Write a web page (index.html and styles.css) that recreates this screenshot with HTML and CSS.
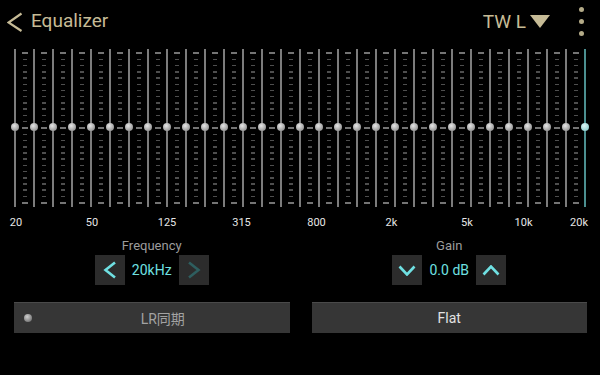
FILE: index.html
```html
<!DOCTYPE html>
<html lang="ja">
<head>
  <meta charset="UTF-8">
  <title>Equalizer</title>
  <link rel="stylesheet" href="styles.css">
</head>
<body>

  <!-- Barra superior -->
  <div class="topbar">
    <svg class="back" width="16" height="20" viewBox="0 0 16 20">
      <polyline points="14.5,1.5 1.5,10.5 14.5,19" fill="none" stroke="#c6bb96" stroke-width="2.2"/>
    </svg>
    <h1>Equalizer</h1>
    <div class="preset">
      <span>TW L</span>
      <svg width="20" height="13" viewBox="0 0 20 13"><polygon points="0,0 20,0 10,13" fill="#c6bb96"/></svg>
    </div>
    <div class="menu"><span></span><span></span><span></span></div>
  </div>

  <!-- Faixas do equalizador (geradas pelo script) -->
  <div class="eq" id="eq"></div>

  <!-- Rótulos de frequência -->
  <div class="freq-labels" id="freqLabels"></div>

  <!-- Controles -->
  <div class="controls">
    <div class="group">
      <div class="group-title">Frequency</div>
      <div class="stepper">
        <div class="step">
          <svg width="14" height="18" viewBox="0 0 14 18"><polyline points="12,1.5 2.5,9 12,16.5" fill="none" stroke="#6fe0e2" stroke-width="2.6"/></svg>
        </div>
        <span class="value">20kHz</span>
        <div class="step">
          <svg width="14" height="18" viewBox="0 0 14 18"><polyline points="2,1.5 11.5,9 2,16.5" fill="none" stroke="#2e5e5f" stroke-width="2.6"/></svg>
        </div>
      </div>
    </div>
    <div class="group">
      <div class="group-title">Gain</div>
      <div class="stepper">
        <div class="step">
          <svg width="18" height="11" viewBox="0 0 18 11"><polyline points="1.5,1.5 9,9.5 16.5,1.5" fill="none" stroke="#6fe0e2" stroke-width="2.6"/></svg>
        </div>
        <span class="value">0.0 dB</span>
        <div class="step">
          <svg width="18" height="11" viewBox="0 0 18 11"><polyline points="1.5,9.5 9,1.5 16.5,9.5" fill="none" stroke="#6fe0e2" stroke-width="2.6"/></svg>
        </div>
      </div>
    </div>
  </div>

  <div class="actions">
    <div class="wide sync"><span class="led"></span>LR同期</div>
    <div class="wide flat">Flat</div>
  </div>

  <script>
    // 31 bandas de 1/3 de oitava, de 20Hz a 20kHz
    const eq = document.getElementById('eq');
    for (let i = 0; i < 31; i++) {
      const band = document.createElement('div');
      band.className = 'band';
      const track = document.createElement('div');
      track.className = 'track';
      const knob = document.createElement('div');
      knob.className = 'knob';
      track.appendChild(knob);
      band.appendChild(track);
      if (i === 30) {
        band.classList.add('active');
      } else {
        const ticks = document.createElement('div');
        ticks.className = 'ticks';
        for (let t = 0; t < 25; t++) {
          const d = document.createElement('span');
          if (t === 0 || t === 12 || t === 24) d.className = 'major';
          ticks.appendChild(d);
        }
        band.appendChild(ticks);
      }
      eq.appendChild(band);
    }

    // Rótulos (centro em px)
    const labels = [['20', 16], ['50', 92], ['125', 167], ['315', 241.5], ['800', 316.5],
                    ['2k', 391.5], ['5k', 467], ['10k', 523.5], ['20k', 579]];
    const row = document.getElementById('freqLabels');
    labels.forEach(([txt, x]) => {
      const s = document.createElement('span');
      s.textContent = txt;
      s.style.left = x + 'px';
      row.appendChild(s);
    });
  </script>

</body>
</html>
```

FILE: styles.css
```css
body {
  margin: 0;
  width: 600px;
  height: 375px;
  overflow: hidden;
  background: #000;
  font-family: Roboto, "Noto Sans CJK JP", sans-serif;
}

/* Barra superior */
.topbar {
  height: 49px;
  display: flex;
  align-items: flex-start;
  padding-left: 7px;
  box-sizing: border-box;
}

.back {
  margin-top: 12px;
}

.topbar h1 {
  margin: 9px 0 0 8px;
  font-size: 19px;
  font-weight: normal;
  color: #c6bb96;
  flex: 1;
}

.preset {
  display: flex;
  align-items: center;
  gap: 4px;
  margin-top: 10px;
  font-size: 19px;
  color: #c6bb96;
}

.menu {
  display: flex;
  flex-direction: column;
  gap: 7px;
  margin: 7px 16px 0 29px;
}

.menu span {
  width: 5px;
  height: 5px;
  border-radius: 50%;
  background: #b4ab88;
}

/* Equalizador */
.eq {
  display: flex;
  padding-left: 14px;
  height: 158px;
}

.band {
  display: flex;
  width: 19px;
}

.band.active {
  width: 2px;
}

.track {
  position: relative;
  width: 2px;
  background: #7c7c7c;
}

.band.active .track {
  background: #4b8f90;
}

.knob {
  position: absolute;
  left: -3px;
  top: 74px;
  width: 8px;
  height: 8px;
  border-radius: 50%;
  background: radial-gradient(circle at 40% 35%, #e6e6e6, #a5a5a5 60%, #7a7a7a);
}

.band.active .knob {
  background: radial-gradient(circle at 40% 35%, #dff6f6, #9fd6d6 60%, #6fa9aa);
}

.ticks {
  flex: 1;
  display: flex;
  flex-direction: column;
  justify-content: space-between;
  align-items: center;
  padding: 3px 0;
}

.ticks span {
  width: 4px;
  height: 1.5px;
  background: #4e4e4e;
}

.ticks span.major {
  width: 6px;
  height: 2px;
  background: #747474;
}

/* Rótulos */
.freq-labels {
  position: relative;
  height: 13px;
  margin-top: 9px;
}

.freq-labels span {
  position: absolute;
  top: 0;
  transform: translateX(-50%);
  font-size: 11px;
  line-height: 13px;
  color: #e6e6e6;
}

/* Controles */
.controls {
  display: grid;
  grid-template-columns: 1fr 1fr;
  gap: 22px;
  padding: 0 13px 0 14px;
  margin-top: 9px;
}

.group {
  display: flex;
  flex-direction: column;
  align-items: center;
}

.group-title {
  font-size: 13px;
  line-height: 15px;
  color: #9c9c9c;
}

.stepper {
  display: flex;
  align-items: center;
  gap: 7px;
  margin-top: 2px;
}

.step {
  width: 30px;
  height: 30px;
  background: #2c2c2c;
  display: flex;
  align-items: center;
  justify-content: center;
}

.value {
  font-size: 14px;
  color: #6fe0e2;
}

/* Botões inferiores */
.actions {
  display: grid;
  grid-template-columns: 1fr 1fr;
  gap: 22px;
  padding: 0 13px 0 14px;
  margin-top: 17px;
}

.wide {
  position: relative;
  height: 31px;
  box-sizing: border-box;
  background: #363636;
  border-top: 1px solid #4a4a4a;
  display: flex;
  align-items: center;
  justify-content: center;
  font-size: 14px;
  color: #a2a2a2;
}

.wide.sync {
  padding-left: 22px;
}

.wide.flat {
  color: #e2e2e2;
}

.led {
  position: absolute;
  left: 10px;
  top: 11px;
  width: 8px;
  height: 8px;
  border-radius: 50%;
  background: radial-gradient(circle at 40% 35%, #cfcfcf, #8a8a8a 60%, #5a5a5a);
}
```
